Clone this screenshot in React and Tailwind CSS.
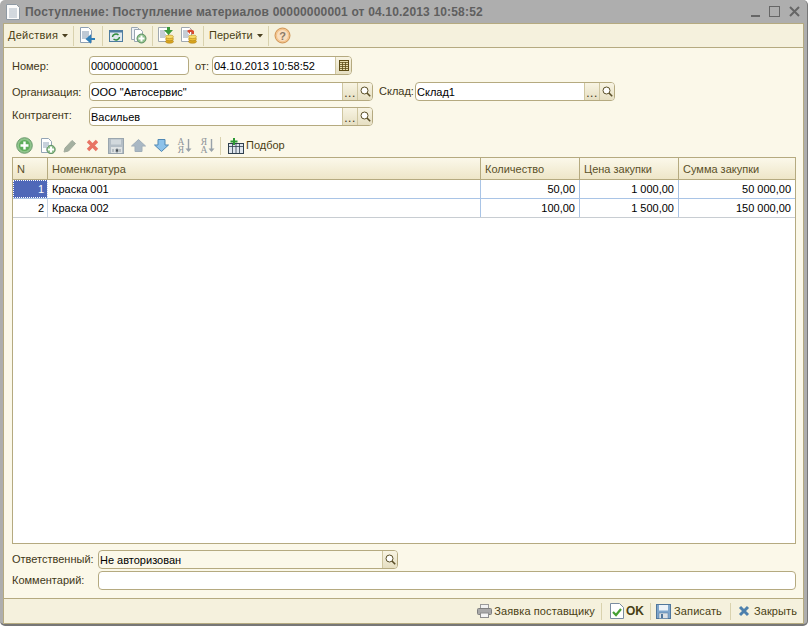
import React from 'react';

const Sep = ({ cls = 'h-[20px]' }) => <div className={`w-px bg-[#d9d2ae] ${cls}`} />;

const Caret = () => (
  <svg width="6" height="4" viewBox="0 0 6 4"><path d="M0 0h6L3 3.500z" fill="#4a4020" /></svg>
);

const Coins = ({ x = 7, y = 9 }) => (
  <g>
    <ellipse cx={x + 4.500} cy={y + 5.500} rx="4" ry="1.800" fill="#d9a520" stroke="#a87a10" strokeWidth=".5" />
    <ellipse cx={x + 4.500} cy={y + 3} rx="4" ry="1.800" fill="#eec23c" stroke="#a87a10" strokeWidth=".5" />
    <ellipse cx={x + 4.500} cy={y + 0.800} rx="4" ry="1.800" fill="#f8dc68" stroke="#a87a10" strokeWidth=".5" />
  </g>
);

const GreenPlus = ({ cx = 11, cy = 11, r = 5 }) => (
  <g>
    <circle cx={cx} cy={cy} r={r} fill="#8cc08a" stroke="#5f8f63" />
    <path d={`M${cx - 3} ${cy}h6M${cx} ${cy - 3}v6`} stroke="#fff" strokeWidth="2" />
  </g>
);

const IconDocArrow = () => (
  <svg width="17" height="17" viewBox="0 0 17 17">
    <path d="M1.500 .5h8l3 3v12h-11z" fill="#fff" stroke="#8ea0b4" />
    <path d="M3 5h7M3 7h7M3 9h7M3 11h5" stroke="#7f93aa" />
    <path d="M16 12H8M8 12l3-2.500v5z" stroke="#2f7fb8" strokeWidth="2" fill="#2f7fb8" />
  </svg>
);

const IconRefresh = () => (
  <svg width="14" height="14" viewBox="0 0 14 14">
    <rect x=".5" y="1.500" width="13" height="11" fill="#dfe8ee" stroke="#4d7ca0" />
    <rect x=".5" y="1.500" width="13" height="2" fill="#4d7ca0" />
    <path d="M3.500 8a3.500 3 0 0 1 6-2M10.500 8a3.500 3 0 0 1-6 2" stroke="#2e8b3c" strokeWidth="1.500" fill="none" />
  </svg>
);

const IconCopyPlus = () => (
  <svg width="17" height="17" viewBox="0 0 17 17">
    <path d="M1.500 .5h6l2 2v10h-8z" fill="#eef1f4" stroke="#9aa7b3" />
    <path d="M4.500 2.500h6l2 2v10h-8z" fill="#fff" stroke="#9aa7b3" />
    <GreenPlus cx={11.500} cy={11.500} r={4.500} />
  </svg>
);

const IconDocCoinGreen = () => (
  <svg width="17" height="17" viewBox="0 0 17 17">
    <path d="M.5 .5h8l2 2v12h-10z" fill="#fff" stroke="#a0a8b0" />
    <path d="M2 4h6M2 6h5M2 8h6M2 10h5" stroke="#8c9cac" />
    <path d="M9 0h3v3h3l-4.500 5L6 3h3z" fill="#3c9a3c" />
    <Coins />
  </svg>
);

const IconDocCoinRed = () => (
  <svg width="17" height="17" viewBox="0 0 17 17">
    <path d="M.5 .5h8l2 2v12h-10z" fill="#fff" stroke="#a0a8b0" />
    <path d="M2 4h6M2 6h5M2 8h6M2 10h5" stroke="#8c9cac" />
    <path d="M6 4a4 3 0 0 1 7 0v3h-2.500V5H9v2z" fill="#d84a32" />
    <Coins />
  </svg>
);

const IconHelp = () => (
  <svg width="17" height="17" viewBox="0 0 17 17">
    <circle cx="8.500" cy="8.500" r="7.500" fill="#f3c48e" stroke="#cf9455" />
    <circle cx="8.500" cy="8.500" r="5.500" fill="#f9dfc0" />
    <text x="8.500" y="12.500" textAnchor="middle" fontSize="11" fontWeight="700" fill="#8a7a68" fontFamily="Liberation Sans, sans-serif">?</text>
  </svg>
);

const IconCalendar = () => (
  <svg width="10" height="11" viewBox="0 0 10 11">
    <rect x=".5" y=".5" width="9" height="10" fill="#e8dfae" stroke="#5d4c16" />
    <path d="M0 2.500h10M0 4.500h10M0 6.500h10M0 8.500h10M3.500 2v9M6.500 2v9" stroke="#5d4c16" strokeWidth=".8" />
  </svg>
);

const IconSearch = () => (
  <svg width="11" height="11" viewBox="0 0 11 11">
    <circle cx="4.500" cy="4.500" r="3.500" fill="#fff" stroke="#5a4f28" />
    <path d="M7 7l3.200 3.200" stroke="#5a4f28" strokeWidth="1.600" />
  </svg>
);

const IconAdd = () => (
  <svg width="17" height="17" viewBox="0 0 17 17">
    <circle cx="8.500" cy="8.500" r="7.800" fill="#8fc48c" stroke="#6c9a6e" />
    <circle cx="8.500" cy="8.500" r="5.500" fill="#5fae5c" />
    <path d="M4.500 8.500h8M8.500 4.500v8" stroke="#fff" strokeWidth="2.400" />
  </svg>
);

const IconDocAdd = () => (
  <svg width="16" height="16" viewBox="0 0 16 16">
    <path d="M1.500 .5h7l3 3v11h-10z" fill="#fff" stroke="#93a4b5" />
    <path d="M3 5h6M3 7h6M3 9h4" stroke="#8ea2b6" />
    <GreenPlus cx={11} cy={11.500} r={4.200} />
  </svg>
);

const IconPencil = () => (
  <svg width="14" height="14" viewBox="0 0 14 14">
    <path d="M1 13l1-4 7-7.500 3.500 3L5.500 12z" fill="#a4b0a0" stroke="#a0aa9c" />
  </svg>
);

const IconDelete = () => (
  <svg width="13" height="13" viewBox="0 0 13 13">
    <path d="M2 2l9 9M11 2l-9 9" stroke="#e87464" strokeWidth="3.400" />
  </svg>
);

const IconSaveGray = () => (
  <svg width="16" height="16" viewBox="0 0 16 16">
    <rect x=".5" y=".5" width="15" height="15" fill="#b4bec6" stroke="#9aa6ae" />
    <rect x="3" y="1.500" width="10" height="5" fill="#d2d9dd" />
    <rect x="3" y="9" width="11" height="6" fill="#dfe3e4" />
    <path d="M5 11v3M8 11h2v3H8zM12 11v3" stroke="#8f9aa2" />
  </svg>
);

const IconUp = () => (
  <svg width="15" height="13" viewBox="0 0 15 13">
    <path d="M7.500 .5L14.500 7H11v5.500H4V7H.5z" fill="#a9b8c4" stroke="#a0aeb9" />
  </svg>
);

const IconDown = () => (
  <svg width="15" height="13" viewBox="0 0 15 13">
    <path d="M7.500 12.500L.5 6H4V.5h7V6h3.500z" fill="#8dc2ea" stroke="#4f88b4" />
  </svg>
);

const IconSort = ({ top, bottom }) => (
  <svg width="15" height="17" viewBox="0 0 15 17">
    <text x="4" y="7.500" textAnchor="middle" fontSize="9.500" fill="#8f9599" fontFamily="Liberation Serif, serif">{top}</text>
    <text x="4" y="16" textAnchor="middle" fontSize="9.500" fill="#8f9599" fontFamily="Liberation Serif, serif">{bottom}</text>
    <path d="M11.500 2v11" stroke="#98a2aa" strokeWidth="1.400" />
    <path d="M8.500 11.500h6l-3 3.500z" fill="#98a2aa" />
  </svg>
);

const IconPick = () => (
  <svg width="16" height="16" viewBox="0 0 16 16">
    <rect x=".5" y="5.500" width="15" height="10" fill="#dfe6ee" stroke="#30404e" />
    <path d="M0 8.500h16M4.500 6v10M8 6v10M11.500 6v10" stroke="#30404e" strokeWidth=".8" />
    <path d="M6 0v7M2.500 3.500h7" stroke="#2c9a34" strokeWidth="2" />
  </svg>
);

const IconPrinter = () => (
  <svg width="15" height="14" viewBox="0 0 15 14">
    <rect x="3.500" y=".5" width="8" height="5" fill="#f2f2f2" stroke="#9a9a9a" />
    <rect x=".5" y="4.500" width="14" height="6" rx="1" fill="#a9a9a9" stroke="#808080" />
    <rect x="3.500" y="9" width="8" height="4.500" fill="#f5f5f5" stroke="#8e8e8e" />
  </svg>
);

const IconOk = () => (
  <svg width="14" height="16" viewBox="0 0 14 16">
    <path d="M.5 .5h9l4 4v11H.5z" fill="#fff" stroke="#7a8ca0" />
    <path d="M3 9l3 3 5-6" stroke="#45a032" strokeWidth="2.200" fill="none" />
  </svg>
);

const IconSave = () => (
  <svg width="15" height="15" viewBox="0 0 15 15">
    <rect x=".5" y=".5" width="14" height="14" fill="#7fa6cc" stroke="#51779c" />
    <rect x="3" y="1" width="9" height="5.500" fill="#eef3f8" />
    <rect x="3" y="9" width="9" height="5.500" fill="#dde2e6" stroke="#51779c" strokeWidth=".5" />
    <rect x="5" y="10" width="2" height="4" fill="#51779c" />
  </svg>
);

const IconClose = () => (
  <svg width="12" height="12" viewBox="0 0 12 12">
    <path d="M2 2l8 8M10 2l-8 8" stroke="#4d80ad" strokeWidth="3" />
  </svg>
);

const FieldBtn = ({ children, wide }) => (
  <div className={`flex items-center justify-center h-full bg-gradient-to-b from-[#f8f4e3] to-[#e6dfc2] border-l border-[#cfc6a0] ${wide ? 'w-[16px]' : 'w-[15px]'}`}>
    {children}
  </div>
);

const Dots = () => <span className="text-[12px] leading-none text-[#40361a] mt-[3px] tracking-[0.5px]">...</span>;

const Field = ({ w, value, pick, bg = 'bg-white', children }) => (
  <div className={`flex items-stretch h-[19px] rounded-[4px] border border-[#b5aa80] overflow-hidden ${bg} ${w}`}>
    <div className="flex-1 flex items-center pl-[1px] pt-[1px] text-black whitespace-nowrap overflow-hidden">
      {value}
    </div>
    {pick && <FieldBtn><Dots /></FieldBtn>}
    {children}
  </div>
);

const columns = [
  { title: 'N', w: 'w-[35px]' },
  { title: 'Номенклатура', w: 'w-[433px]' },
  { title: 'Количество', w: 'w-[99px]' },
  { title: 'Цена закупки', w: 'w-[99px]' },
  { title: 'Сумма закупки', w: 'flex-1' },
];

const rows = [
  { n: 1, name: 'Краска 001', qty: '50,00', price: '1 000,00', sum: '50 000,00' },
  { n: 2, name: 'Краска 002', qty: '100,00', price: '1 500,00', sum: '150 000,00' },
];

const Row = ({ row, first }) => (
  <div className={`flex h-[19px] border-b ${first ? 'border-[#a9c4e6]' : 'border-[#c8cdd2]'}`}>
    <div className={`w-[35px] flex items-center justify-end pr-[3px] border-r border-[#c9d6e6] ${first ? 'bg-[#4f68b8] text-white outline-1 -outline-offset-1 outline-dotted outline-white' : ''}`}>{row.n}</div>
    <div className="w-[433px] flex items-center pl-[4px] border-r border-[#a9c4e6]">{row.name}</div>
    <div className="w-[99px] flex items-center justify-end pr-[4px] border-r border-[#a9c4e6]">{row.qty}</div>
    <div className="w-[99px] flex items-center justify-end pr-[4px] border-r border-[#a9c4e6]">{row.price}</div>
    <div className="flex-1 flex items-center justify-end pr-[4px]">{row.sum}</div>
  </div>
);

export default function App() {
  return (
    <div className="w-[808px] h-[627px] bg-white font-['Liberation_Sans',sans-serif] text-[11px] text-[#3f3717]">
      <div className="w-[808px] h-[626px] flex flex-col rounded-[5px] overflow-hidden bg-[#aeaeae] border-b-2 border-r border-[#777777]">
        <div className="h-[23px] shrink-0 flex items-center pl-[6px] pr-[7px]">
          <svg width="14" height="16" viewBox="0 0 14 16">
            <path d="M.5 .5h10l3 3v12H.5z" fill="#fbfbfb" stroke="#8f9aa4" />
            <path d="M3 5h8M3 7h8M3 9h8M3 11h8M3 13h8" stroke="#aab6c2" />
          </svg>
          <span className="ml-[5px] text-[12px] font-bold tracking-[0.17px] text-[#5f5f5f] whitespace-nowrap">Поступление: Поступление материалов 00000000001 от 04.10.2013 10:58:52</span>
          <div className="ml-auto flex items-center gap-[9px]">
            <div className="w-[9px] h-[2px] bg-[#666666] mt-[9px]" />
            <div className="w-[11px] h-[11px] border border-[#666666]" />
            <svg width="11" height="11" viewBox="0 0 11 11"><path d="M1 1l9 9M10 1l-9 9" stroke="#666666" strokeWidth="2" /></svg>
          </div>
        </div>

        <div className="flex-1 min-h-0 flex flex-col ml-[3px] mr-[3px] bg-[#fbf8e9] border border-[#b5aa80]">
          <div className="h-[24px] shrink-0 flex items-center pl-[4px] bg-[#f5f1dd] border-b border-[#b5aa80]">
            <span className="w-[50px] tracking-[0.25px] whitespace-nowrap text-[#4a3f14]">Действия</span>
            <span className="ml-[4px]"><Caret /></span>
            <div className="ml-[5px]"><Sep /></div>
            <div className="ml-[5px]"><IconDocArrow /></div>
            <div className="ml-[6px]"><Sep /></div>
            <div className="ml-[6px]"><IconRefresh /></div>
            <div className="ml-[7px]"><IconCopyPlus /></div>
            <div className="ml-[5px]"><Sep /></div>
            <div className="ml-[5px]"><IconDocCoinGreen /></div>
            <div className="ml-[6px]"><IconDocCoinRed /></div>
            <div className="ml-[5px]"><Sep /></div>
            <span className="ml-[5px] text-[#4a3f14]">Перейти</span>
            <span className="ml-[4px]"><Caret /></span>
            <div className="ml-[5px]"><Sep /></div>
            <div className="ml-[5px]"><IconHelp /></div>
          </div>

          <div className="flex-1 min-h-0 flex flex-col pl-[8px] pr-[7px]">
            <div className="mt-[8px] flex items-center">
              <span className="w-[77px] pt-[1px]">Номер:</span>
              <Field w="w-[100px]" value="00000000001" />
              <span className="ml-[6px] w-[17px] pt-[1px]">от:</span>
              <Field w="w-[140px]" value="04.10.2013 10:58:52">
                <FieldBtn wide><IconCalendar /></FieldBtn>
              </Field>
            </div>
            <div className="mt-[7px] flex items-center">
              <span className="w-[77px] pt-[1px]">Организация:</span>
              <Field w="w-[284px]" value={'ООО "Автосервис"'} pick>
                <FieldBtn><IconSearch /></FieldBtn>
              </Field>
              <span className="ml-[6px] w-[36px]">Склад:</span>
              <Field w="w-[200px]" value="Склад1" pick>
                <FieldBtn><IconSearch /></FieldBtn>
              </Field>
            </div>
            <div className="mt-[6px] flex items-center">
              <span className="w-[77px] pb-[2px]">Контрагент:</span>
              <Field w="w-[284px]" value="Васильев" pick>
                <FieldBtn><IconSearch /></FieldBtn>
              </Field>
            </div>

            <div className="mt-[9px] h-[21px] shrink-0 flex items-center pl-[4px]">
              <IconAdd />
              <div className="ml-[7px]"><IconDocAdd /></div>
              <div className="ml-[7px]"><IconPencil /></div>
              <div className="ml-[9px]"><IconDelete /></div>
              <div className="ml-[9px]"><IconSaveGray /></div>
              <div className="ml-[7px]"><IconUp /></div>
              <div className="ml-[8px]"><IconDown /></div>
              <div className="ml-[8px]"><IconSort top="А" bottom="Я" /></div>
              <div className="ml-[8px]"><IconSort top="Я" bottom="А" /></div>
              <div className="ml-[5px]"><Sep cls="h-[18px]" /></div>
              <div className="ml-[7px]"><IconPick /></div>
              <span className="ml-[2px] text-[#4a3f14]">Подбор</span>
            </div>

            <div className="mt-[1px] flex-1 min-h-0 bg-white border border-[#b5aa80] text-black">
              <div className="h-[22px] flex bg-gradient-to-b from-[#fbf8ea] to-[#eee6c8] border-b border-[#b5aa80] text-[#5a5028]">
                {columns.map((c, i) => (
                  <div key={c.title} className={`${c.w} flex items-center pl-[4px] pt-[1px] ${i < 4 ? 'border-r border-[#b5aa80]' : ''}`}>{c.title}</div>
                ))}
              </div>
              {rows.map((r, i) => <Row key={r.n} row={r} first={i === 0} />)}
            </div>

            <div className="mt-[6px] flex items-center">
              <span className="w-[86px] whitespace-nowrap">Ответственный:</span>
              <Field w="w-[300px]" value="Не авторизован" bg="bg-[#fbf8e9]">
                <FieldBtn><IconSearch /></FieldBtn>
              </Field>
            </div>
            <div className="mt-[2px] mb-[8px] flex items-center">
              <span className="w-[86px]">Комментарий:</span>
              <Field w="flex-1" value="" />
            </div>
          </div>

          <div className="h-[25px] shrink-0 flex items-center justify-end pr-[6px] bg-[#f5f1dd] border-t border-[#b5aa80] text-[#4a3f14] tracking-[0.1px]">
            <IconPrinter />
            <span className="ml-[2px]">Заявка поставщику</span>
            <div className="ml-[6px]"><Sep cls="h-[17px]" /></div>
            <div className="ml-[8px]"><IconOk /></div>
            <span className="ml-[2px] text-[12px] font-bold">OK</span>
            <div className="ml-[6px]"><Sep cls="h-[17px]" /></div>
            <div className="ml-[5px]"><IconSave /></div>
            <span className="ml-[3px]">Записать</span>
            <div className="ml-[8px]"><Sep cls="h-[17px]" /></div>
            <div className="ml-[7px]"><IconClose /></div>
            <span className="ml-[4px]">Закрыть</span>
          </div>
        </div>
      </div>
    </div>
  );
}
